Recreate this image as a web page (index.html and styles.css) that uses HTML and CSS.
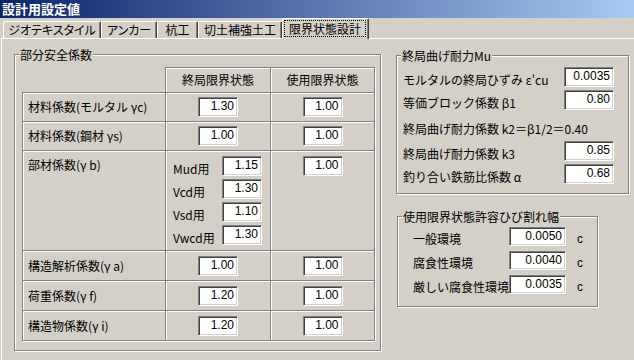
FILE: index.html
```html
<!DOCTYPE html>
<html lang="ja">
<head>
<meta charset="utf-8">
<title>設計用設定値</title>
<link rel="stylesheet" href="styles.css">
</head>
<body>
<div class="window">
  <div class="titlebar">設計用設定値</div>
  <div class="tabs">
    <div class="tab tab-geo">ジオテキスタイル</div>
    <div class="tab tab-anchor">アンカー</div>
    <div class="tab tab-pile">杭工</div>
    <div class="tab tab-cut">切土補強土工</div>
    <div class="tab tab-active"><span class="focus">限界状態設計</span></div>
  </div>
  <div class="panel">
    <div class="group group-safety">
      <span class="legend">部分安全係数</span>
      <div class="grid">
        <div class="corner"></div>
        <div class="cell head">終局限界状態</div>
        <div class="cell head">使用限界状態</div>

        <div class="cell label">材料係数(モルタル γc)</div>
        <div class="cell center"><span class="field">1.30</span></div>
        <div class="cell center"><span class="field">1.00</span></div>

        <div class="cell label">材料係数(鋼材 γs)</div>
        <div class="cell center"><span class="field">1.00</span></div>
        <div class="cell center"><span class="field">1.00</span></div>

        <div class="cell label label-top">部材係数(γ b)</div>
        <div class="cell stack">
          <div class="line"><span class="lbl">Mud用</span><span class="field">1.15</span></div>
          <div class="line"><span class="lbl">Vcd用</span><span class="field">1.30</span></div>
          <div class="line"><span class="lbl">Vsd用</span><span class="field">1.10</span></div>
          <div class="line"><span class="lbl">Vwcd用</span><span class="field">1.30</span></div>
        </div>
        <div class="cell center top"><span class="field">1.00</span></div>

        <div class="cell label">構造解析係数(γ a)</div>
        <div class="cell center"><span class="field">1.00</span></div>
        <div class="cell center"><span class="field">1.00</span></div>

        <div class="cell label">荷重係数(γ f)</div>
        <div class="cell center"><span class="field">1.20</span></div>
        <div class="cell center"><span class="field">1.00</span></div>

        <div class="cell label">構造物係数(γ i)</div>
        <div class="cell center"><span class="field">1.20</span></div>
        <div class="cell center"><span class="field">1.00</span></div>
      </div>
    </div>

    <div class="right">
      <div class="group group-mu">
        <span class="legend">終局曲げ耐力Mu</span>
        <div class="mu-row"><span class="lbl">モルタルの終局ひずみ ε'cu</span><span class="field field-mu">0.0035</span></div>
        <div class="mu-row"><span class="lbl">等価ブロック係数 β1</span><span class="field field-mu">0.80</span></div>
        <div class="mu-text">終局曲げ耐力係数 k2＝β1/2＝0.40</div>
        <div class="mu-row"><span class="lbl">終局曲げ耐力係数 k3</span><span class="field field-mu">0.85</span></div>
        <div class="mu-row"><span class="lbl">釣り合い鉄筋比係数 α</span><span class="field field-mu">0.68</span></div>
      </div>

      <div class="group group-crack">
        <span class="legend">使用限界状態許容ひび割れ幅</span>
        <div class="cr-row"><span class="lbl">一般環境</span><span class="field field-cr">0.0050</span><span class="unit">c</span></div>
        <div class="cr-row"><span class="lbl">腐食性環境</span><span class="field field-cr">0.0040</span><span class="unit">c</span></div>
        <div class="cr-row"><span class="lbl">厳しい腐食性環境</span><span class="field field-cr">0.0035</span><span class="unit">c</span></div>
      </div>
    </div>
  </div>
</div>
</body>
</html>
```
FILE: styles.css
```css
* { box-sizing: border-box; }

html, body {
  margin: 0;
  background: #d4d0c8;
}

body {
  font-family: "Noto Sans CJK JP", sans-serif;
  font-size: 12px;
  line-height: 16px;
  color: #000;
  width: 634px;
  height: 360px;
  overflow: hidden;
}

.titlebar {
  height: 18px;
  background: linear-gradient(to right, #0a246a, #a6caf0);
  color: #fff;
  font-weight: bold;
  font-size: 13px;
  line-height: 18px;
  padding-left: 2px;
}

.tabs {
  display: flex;
  align-items: flex-end;
  height: 20px;
  padding-left: 3px;
}

.tab {
  height: 17px;
  border-top: 1px solid #fff;
  border-left: 1px solid #fff;
  border-right: 1px solid #404040;
  box-shadow: inset -1px 0 #808080;
  border-radius: 2px 2px 0 0;
  padding: 0;
  line-height: 16px;
  text-align: center;
  white-space: nowrap;
  font-feature-settings: "palt";
}

.tab-geo { width: 98px; }
.tab-anchor { width: 56px; }
.tab-pile { width: 41px; font-feature-settings: normal; }
.tab-cut { width: 84px; font-feature-settings: normal; }

.tab-active {
  width: 87px;
  height: 21px;
  margin-bottom: -1px;
  position: relative;
  z-index: 1;
  background: #d4d0c8;
  padding: 1px 2px 0 1px;
  font-feature-settings: normal;
}

.focus {
  display: block;
  border: 1px dotted #000;
  height: 17px;
  line-height: 15px;
}

.panel {
  margin-left: 1px;
  border-top: 1px solid #fff;
  border-left: 1px solid #fff;
  height: 322px;
  display: flex;
  align-items: flex-start;
  padding: 15px 0 0 12px;
}

.group {
  position: relative;
  border: 1px solid #808080;
  box-shadow: inset 1px 1px #fff, 1px 1px #fff;
}

.legend {
  position: absolute;
  top: -8px;
  left: 4px;
  padding: 0 1px;
  background: #d4d0c8;
  line-height: 15px;
  white-space: nowrap;
}

.group-safety {
  width: 367px;
  height: 297px;
  padding: 12px 0 0 7px;
}

.grid {
  display: grid;
  grid-template-columns: 143px 105px 104px;
  grid-template-rows: 25px 29px 29px 100px 30px 30px 30px;
  width: 353px;
  border-right: 1px solid #808080;
  border-bottom: 1px solid #808080;
  box-shadow: 1px 1px #fff;
}

.cell {
  border-top: 1px solid #808080;
  border-left: 1px solid #808080;
  box-shadow: inset 1px 1px #fff;
  display: flex;
  align-items: center;
}

.head { justify-content: center; }
.center { justify-content: center; }
.top { align-items: flex-start; padding-top: 5px; }

.label {
  padding-left: 5px;
  white-space: nowrap;
}

.label-top {
  align-items: flex-start;
  padding-top: 6px;
}

.stack {
  flex-direction: column;
  align-items: stretch;
  padding: 5px 8px 0 7px;
  gap: 3px;
}

.line {
  display: flex;
  justify-content: space-between;
  align-items: center;
  height: 20px;
}

.lbl {
  padding-top: 5px;
  white-space: nowrap;
}

.field {
  display: block;
  width: 40px;
  height: 20px;
  background: #fff;
  border-top: 1px solid #808080;
  border-left: 1px solid #808080;
  border-right: 1px solid #fff;
  border-bottom: 1px solid #fff;
  box-shadow: inset 1px 1px #404040, inset -1px -1px #d4d0c8;
  text-align: right;
  padding: 1px 3px 0 0;
  font-family: "Liberation Sans", sans-serif;
  font-size: 12px;
  line-height: 15px;
}

.right {
  margin-left: 15px;
  margin-top: 1px;
  display: flex;
  flex-direction: column;
  align-items: flex-start;
}

.group-mu {
  width: 233px;
  height: 139px;
  padding: 11px 14px 0 6px;
  display: flex;
  flex-direction: column;
  gap: 3px;
}

.mu-row {
  display: flex;
  justify-content: space-between;
  align-items: center;
  height: 20px;
}

.field-mu { width: 50px; }

.mu-text {
  height: 25px;
  display: flex;
  align-items: center;
  padding-top: 6px;
  white-space: nowrap;
}

.group-crack {
  margin-left: 1px;
  margin-top: 22px;
  width: 201px;
  height: 91px;
  padding: 10px 0 0 15px;
  display: flex;
  flex-direction: column;
  gap: 5px;
}

.cr-row {
  display: flex;
  align-items: center;
  height: 19px;
}

.cr-row .lbl { width: 96px; }

.field-cr {
  width: 57px;
  height: 19px;
}

.unit {
  margin-left: 11px;
  padding-top: 5px;
  font-family: "Liberation Sans", sans-serif;
}
```
